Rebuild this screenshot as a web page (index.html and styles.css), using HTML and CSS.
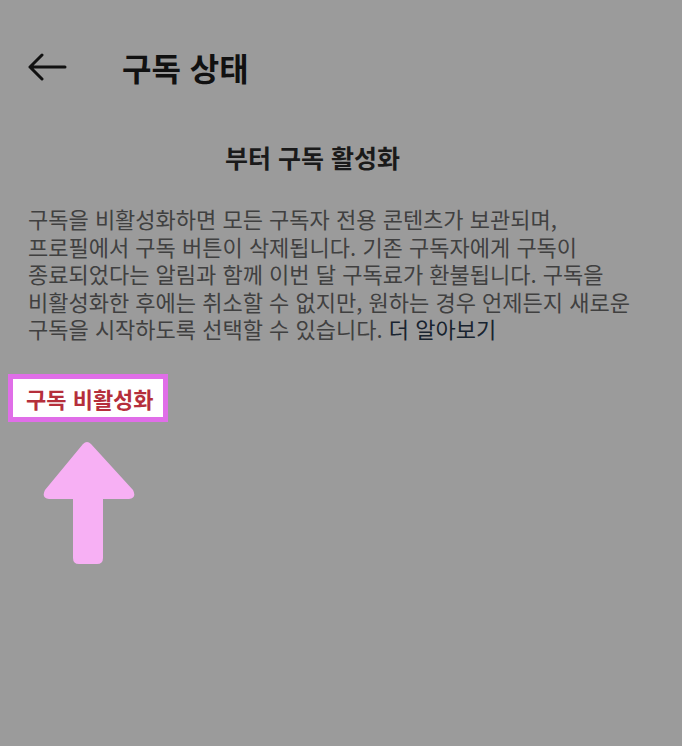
FILE: index.html
```html
<!DOCTYPE html>
<html lang="ko">
<head>
   <meta charset="UTF-8">
   <title>구독 상태</title>
   <link rel="stylesheet" href="styles.css">
</head>
<body>
<div class="screen">
   <div class="topbar">
      <a class="back" href="#">
         <svg width="40" height="28" viewBox="0 0 40 28">
            <path d="M38 14H3M15 2L3 14l12 12" fill="none" stroke="#111" stroke-width="3" stroke-linecap="round" stroke-linejoin="round"/>
         </svg>
      </a>
      <h1 class="title">구독 상태</h1>
   </div>

   <h2 class="heading">부터 구독 활성화</h2>

   <p class="desc">
      구독을 비활성화하면 모든 구독자 전용 콘텐츠가 보관되며,<br>
      프로필에서 구독 버튼이 삭제됩니다. 기존 구독자에게 구독이<br>
      종료되었다는 알림과 함께 이번 달 구독료가 환불됩니다. 구독을<br>
      비활성화한 후에는 취소할 수 없지만, 원하는 경우 언제든지 새로운<br>
      구독을 시작하도록 선택할 수 있습니다. <a class="more" href="#">더 알아보기</a>
   </p>

   <div class="action">
      <a class="deactivate" href="#">구독 비활성화</a>
   </div>

   <div class="pointer">
      <svg width="96" height="126" viewBox="0 0 96 126">
         <path d="M42 4Q46 0 50 4L92 50Q96 58 88 59H62V118Q62 124 56 124H38Q32 124 32 118V59H8Q0 58 4 50Z" fill="#f7b0f4"/>
      </svg>
   </div>
</div>
</body>
</html>
```

FILE: styles.css
```css
body {
   margin: 0;
   padding: 0;
   font-family: "Noto Sans CJK KR", "Noto Sans", sans-serif;
   background: #9b9b9b;
}

a {
   text-decoration: none;
}

.screen {
   width: 682px;
   height: 746px;
   background: #9b9b9b;
   overflow: hidden;
}

.topbar {
   display: flex;
   align-items: center;
   height: 70px;
   padding: 32px 0 0 27px;
}

.back {
   display: flex;
   width: 40px;
   height: 28px;
}

.title {
   margin: 0 0 0 55px;
   font-size: 32px;
   font-weight: 700;
   color: #111;
}

.heading {
   margin: 37px 0 0 225px;
   font-size: 25px;
   line-height: 36px;
   font-weight: 700;
   color: #1a1a1a;
}

.desc {
   margin: 30px 0 0 28px;
   font-size: 22px;
   line-height: 27.5px;
   color: #404040;
   white-space: nowrap;
}

.more {
   color: #18232f;
}

.action {
   display: flex;
   margin-top: 31px;
   padding-left: 8px;
}

.deactivate {
   display: block;
   background: #fff;
   border: 5px solid #e06ee8;
   padding: 3px 9px 3px 13px;
   font-size: 22px;
   line-height: 32px;
   font-weight: 700;
   color: #b52f3b;
}

.pointer {
   display: flex;
   margin: 18px 0 0 41px;
}
```
